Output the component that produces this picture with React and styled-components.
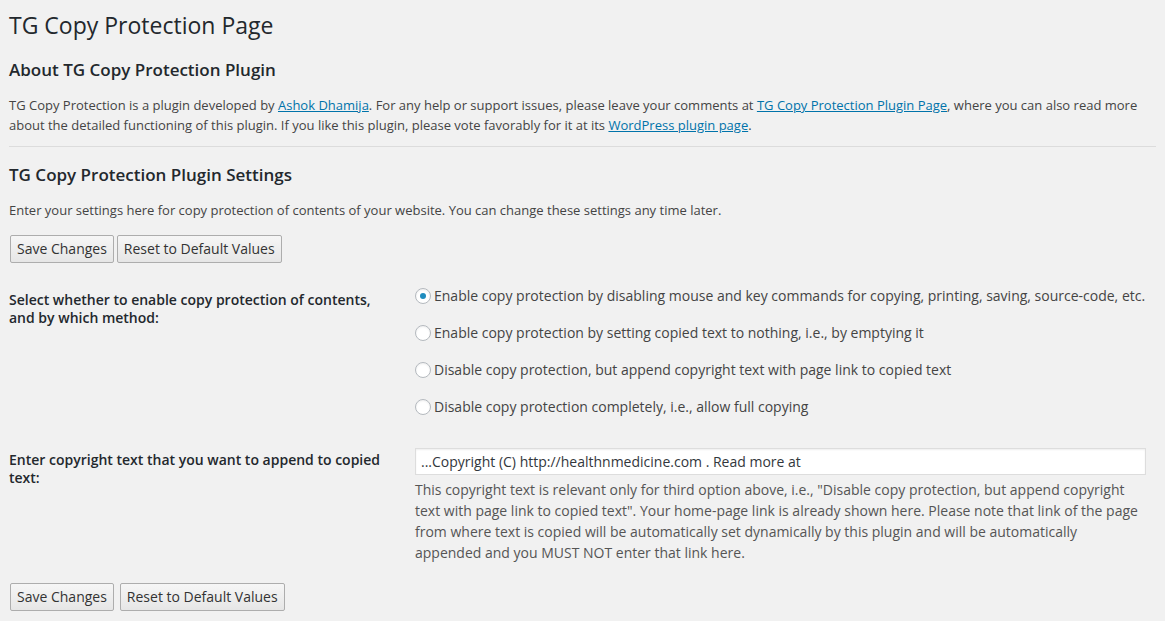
import { useState } from 'react';
import styled, { createGlobalStyle } from 'styled-components';

const GlobalStyle = createGlobalStyle`
  html, body {
    margin: 0;
    padding: 0;
    background: #f1f1f1;
  }
  body {
    font-family: "Open Sans", "Liberation Sans", sans-serif;
    font-size: 13px;
    color: #444;
  }
`;

const options = [
  { value: 'disable-keys', label: 'Enable copy protection by disabling mouse and key commands for copying, printing, saving, source-code, etc.' },
  { value: 'empty-text', label: 'Enable copy protection by setting copied text to nothing, i.e., by emptying it' },
  { value: 'append', label: 'Disable copy protection, but append copyright text with page link to copied text' },
  { value: 'none', label: 'Disable copy protection completely, i.e., allow full copying' },
];

const Wrap = styled.div`
  padding: 0 9px;
`;

const PageTitle = styled.h1`
  margin: 0;
  padding: 11px 0 0;
  font-size: 23px;
  font-weight: 400;
  line-height: 29px;
  color: #23282d;
`;

const SectionTitle = styled.h2`
  margin: ${({ $top }) => $top} 0 0;
  font-size: 17px;
  font-weight: 600;
  line-height: 22px;
  color: #23282d;
`;

const Text = styled.p`
  margin: ${({ $top }) => $top} 0 0;
  font-size: 13px;
  line-height: 20px;
`;

const Link = styled.a`
  color: #0073aa;
  text-decoration: underline;
`;

const Rule = styled.hr`
  margin: 11px 0 0;
  border: 0;
  border-top: 1px solid #dcdcdc;
`;

const ButtonRow = styled.div`
  display: flex;
  gap: ${({ $gap }) => $gap}px;
  margin-top: ${({ $top }) => $top}px;
  padding-left: 1px;
`;

const Button = styled.button`
  height: 28px;
  padding: 0 6px 1px;
  font-family: inherit;
  font-size: 14px;
  color: #333;
  background: linear-gradient(#f6f6f6, #e6e6e6);
  border: 1px solid #adadad;
  border-radius: 2px;
  cursor: pointer;
`;

const FormTable = styled.div`
  display: grid;
  grid-template-columns: 396px 1fr;
  margin-top: 8px;
`;

const Label = styled.div`
  padding: 20px 10px 20px 0;
  font-size: 14px;
  font-weight: 600;
  line-height: 18px;
  color: #23282d;
`;

const Field = styled.div`
  padding: 15px 10px 15px 10px;
`;

const RadioList = styled.div`
  display: flex;
  flex-direction: column;
  gap: 18px;
`;

const RadioLabel = styled.label`
  display: flex;
  align-items: center;
  gap: 3px;
  font-size: 14px;
  line-height: 19px;
  color: #444;
  cursor: pointer;
`;

const Radio = styled.span`
  width: 16px;
  height: 16px;
  flex-shrink: 0;
  box-sizing: border-box;
  border: 1px solid #b4b9be;
  border-radius: 50%;
  background: #fff;
  box-shadow: inset 0 1px 2px rgba(0, 0, 0, 0.07);
  display: flex;
  align-items: center;
  justify-content: center;

  &::after {
    content: '';
    width: 6px;
    height: 6px;
    border-radius: 50%;
    background: #1e8cbe;
    display: ${({ $checked }) => ($checked ? 'block' : 'none')};
  }
`;

const TextInput = styled.input`
  display: block;
  width: 100%;
  box-sizing: border-box;
  height: 27px;
  margin-top: 2px;
  padding: 0 5px;
  font-family: inherit;
  font-size: 14px;
  color: #32373c;
  background: #fff;
  border: 1px solid #ddd;
  box-shadow: inset 0 1px 2px rgba(0, 0, 0, 0.07);
  outline: none;
`;

const Description = styled.p`
  margin: 4px 0 0;
  font-size: 14px;
  line-height: 21px;
  color: #555;
`;

const App = () => {
  const [method, setMethod] = useState('disable-keys');
  const [copyright, setCopyright] = useState('...Copyright (C) http://healthnmedicine.com . Read more at');

  return (
    <>
      <GlobalStyle />
      <Wrap>
        <PageTitle>TG Copy Protection Page</PageTitle>
        <SectionTitle $top="19px">About TG Copy Protection Plugin</SectionTitle>
        <Text $top="14px">
          TG Copy Protection is a plugin developed by <Link href="#">Ashok Dhamija</Link>. For any help or support issues, please leave your comments at <Link href="#">TG Copy Protection Plugin Page</Link>, where you can also read more about the detailed functioning of this plugin. If you like this plugin, please vote favorably for it at its <Link href="#">WordPress plugin page</Link>.
        </Text>
        <Rule />
        <SectionTitle $top="17px">TG Copy Protection Plugin Settings</SectionTitle>
        <Text $top="14px">
          Enter your settings here for copy protection of contents of your website. You can change these settings any time later.
        </Text>
        <ButtonRow $top={15} $gap={3}>
          <Button>Save Changes</Button>
          <Button>Reset to Default Values</Button>
        </ButtonRow>

        <FormTable>
          <Label>Select whether to enable copy protection of contents, and by which method:</Label>
          <Field>
            <RadioList>
              {options.map((option) => (
                <RadioLabel key={option.value} onClick={() => setMethod(option.value)}>
                  <Radio $checked={method === option.value} />
                  <span>{option.label}</span>
                </RadioLabel>
              ))}
            </RadioList>
          </Field>

          <Label>Enter copyright text that you want to append to copied text:</Label>
          <Field>
            <TextInput value={copyright} onChange={(e) => setCopyright(e.target.value)} />
            <Description>
              This copyright text is relevant only for third option above, i.e., "Disable copy protection, but append copyright text with page link to copied text". Your home-page link is already shown here. Please note that link of the page from where text is copied will be automatically set dynamically by this plugin and will be automatically appended and you MUST NOT enter that link here.
            </Description>
          </Field>
        </FormTable>

        <ButtonRow $top={5} $gap={6}>
          <Button>Save Changes</Button>
          <Button>Reset to Default Values</Button>
        </ButtonRow>
      </Wrap>
    </>
  );
};

export default App;
